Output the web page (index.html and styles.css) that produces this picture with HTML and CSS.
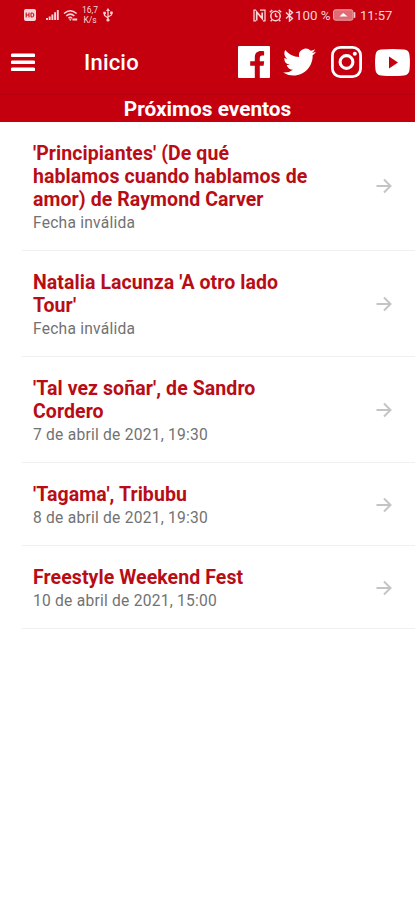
FILE: index.html
```html
<!DOCTYPE html>
<html lang="es">
<head>
<meta charset="utf-8">
<meta name="viewport" content="width=device-width, initial-scale=1">
<title>Inicio</title>
<link rel="stylesheet" href="styles.css">
</head>
<body>
<svg width="0" height="0" class="defs"><symbol id="arrow" viewBox="0 0 16 16"><path d="M0.5 8H14.5M8 1.5L14.5 8L8 14.5" fill="none" stroke="currentColor" stroke-width="2"/></symbol></svg>
<header class="header">
  <div class="status">
    <div class="status-left">
      <svg class="hd" width="12" height="12" viewBox="0 0 12 12"><rect width="12" height="12" rx="2" fill="currentColor"/><path d="M2.2 3.5v5M5 3.5v5M2.2 6H5M7 4v4h1.2q1.6 0 1.6-2T8.2 4z" fill="none" stroke="#c4000f" stroke-width="1"/></svg>
      <svg class="signal" width="13" height="12" viewBox="0 0 13 12"><path d="M1 11V9M3.7 11V7.5M6.4 11V5.5M9.1 11V3.2M11.8 11V1" stroke="currentColor" stroke-width="1.9"/></svg>
      <svg class="wifi" width="15" height="13" viewBox="0 0 15 13"><path d="M1 4.5Q7.3-1 13.6 4.5M3.2 7Q7.3 3.2 11.4 7M5.4 9.2Q7.3 7.6 9 9.2" fill="none" stroke="currentColor" stroke-width="1.5"/><path d="M6 10.3h2.6L7.3 12zM9.4 9.5h4.8v2H9.4z" fill="currentColor"/></svg>
      <div class="speed"><span>16,7</span><span>K/s</span></div>
      <svg class="usb" width="10" height="14" viewBox="0 0 10 14"><path d="M5 2v10M1.5 5v2.5L5 10M8.5 4.5V7L5 9" fill="none" stroke="currentColor" stroke-width="1.2"/><path d="M5 0L7 3H3zM.3 3.7h2.5v2.5H.3zM7.2 3.5h2.5V6H7.2z" fill="currentColor"/><circle cx="5" cy="12" r="1.6" fill="currentColor"/></svg>
    </div>
    <div class="status-right">
      <svg width="13" height="13" viewBox="0 0 13 13"><path d="M3 1.2H1v10.6h2.2M7 1.2h5v10.6h-2" fill="none" stroke="currentColor" stroke-width="1.3"/><path d="M3.7 11.5V3L9.2 9.5V3.5" fill="none" stroke="currentColor" stroke-width="1.7"/></svg>
      <svg class="alarm" width="13" height="13" viewBox="0 0 13 13"><circle cx="6.5" cy="7" r="4.7" fill="none" stroke="currentColor" stroke-width="1.5"/><path d="M6.5 4.3V7l2 1M.8 3.3L3.3 1M12.2 3.3L9.7 1M3 10.7l-1.3 1.6M10 10.7l1.3 1.6" fill="none" stroke="currentColor" stroke-width="1.4"/></svg>
      <svg class="bt" width="9" height="13" viewBox="0 0 9 13"><path d="M1 3.5l6.5 6-3 2.5V1l3 2.5-6.5 6" fill="none" stroke="currentColor" stroke-width="1.4"/></svg>
      <span class="percent">100 %</span>
      <svg class="battery" width="23" height="12" viewBox="0 0 23 12"><rect x=".5" y=".8" width="19.5" height="10.4" rx="2" fill="#df6c74" stroke="#eaa0a5"/><path d="M21.5 3.2v5.6" stroke="#f6d0d2" stroke-width="1.6"/><path d="M6.5 7.5L10.2 4L14.5 7.5z" fill="#fff"/></svg>
      <span class="clock">11:57</span>
    </div>
  </div>
  <nav class="toolbar">
    <svg class="menu" width="24" height="19" viewBox="0 0 24 19"><path d="M1.4 2.2h21.2M1.4 9.2h21.2M1.4 16.3h21.2" stroke="#fff" stroke-width="3.6" stroke-linecap="round"/></svg>
    <h1 class="title">Inicio</h1>
    <div class="social">
      <svg width="32" height="32" viewBox="0 0 32 32"><path fill="#fff" d="M1 0h30Q32 0 32 1v30q0 1-1 1h-9.2V19.7h3.8l.6-4.4h-4.4v-3.1c0-1.6.6-2.6 2.4-2.6h1.9V5.2c-.5-.1-1.6-.2-3-.2-3.9 0-6.3 2.2-6.3 6.3v4h-4.6v4.4h4.6V32H1Q0 32 0 31V1Q0 0 1 0z"/></svg>
      <svg width="33" height="28" viewBox="0 1.8 24 20.3" preserveAspectRatio="none"><path fill="#fff" d="M23.953 4.57a10 10 0 01-2.825.775 4.958 4.958 0 002.163-2.723c-.951.555-2.005.959-3.127 1.184a4.92 4.92 0 00-8.384 4.482C7.69 8.095 4.067 6.13 1.64 3.162a4.822 4.822 0 00-.666 2.475c0 1.71.87 3.213 2.188 4.096a4.904 4.904 0 01-2.228-.616v.06a4.923 4.923 0 003.946 4.827 4.996 4.996 0 01-2.212.085 4.936 4.936 0 004.604 3.417 9.867 9.867 0 01-6.102 2.105c-.39 0-.779-.023-1.17-.067a13.995 13.995 0 007.557 2.209c9.053 0 13.998-7.496 13.998-13.985 0-.21 0-.42-.015-.63A9.935 9.935 0 0024 4.59z"/></svg>
      <svg width="31" height="32" viewBox="0 0 31 32"><g fill="none" stroke="#fff"><rect x="1.4" y="1.4" width="28.2" height="29.2" rx="8" stroke-width="2.8"/><circle cx="15.5" cy="16" r="6.4" stroke-width="3.1"/></g><circle cx="23.8" cy="7.8" r="2" fill="#fff"/></svg>
      <svg width="35" height="27" viewBox="0 0 35 27"><path fill="#fff" fill-rule="evenodd" d="M6 .6Q17.5-.6 29 .6Q34 1 34.5 6Q35.4 13.5 34.5 21Q34 26 29 26.4Q17.5 27.6 6 26.4Q1 26 .5 21Q-.4 13.5 .5 6Q1 1 6 .6zM14 7.6v12l9-6z"/></svg>
    </div>
  </nav>
  <h2 class="banner"><span>Próximos eventos</span></h2>
</header>
<main class="events">
  <article class="event">
    <div><h3>'Principiantes' (De qué<br>hablamos cuando hablamos de<br>amor) de Raymond Carver</h3><p>Fecha inválida</p></div>
    <svg class="arrow"><use href="#arrow"/></svg>
  </article>
  <article class="event">
    <div><h3>Natalia Lacunza 'A otro lado<br>Tour'</h3><p>Fecha inválida</p></div>
    <svg class="arrow"><use href="#arrow"/></svg>
  </article>
  <article class="event">
    <div><h3>'Tal vez soñar', de Sandro<br>Cordero</h3><p>7 de abril de 2021, 19:30</p></div>
    <svg class="arrow"><use href="#arrow"/></svg>
  </article>
  <article class="event">
    <div><h3>'Tagama', Tribubu</h3><p>8 de abril de 2021, 19:30</p></div>
    <svg class="arrow"><use href="#arrow"/></svg>
  </article>
  <article class="event">
    <div><h3>Freestyle Weekend Fest</h3><p>10 de abril de 2021, 15:00</p></div>
    <svg class="arrow"><use href="#arrow"/></svg>
  </article>
</main>
</body>
</html>
```
FILE: styles.css
```css
* { box-sizing: border-box; }
body { margin: 0; min-height: 900px; background: #fff; font-family: Roboto, sans-serif; }
h1, h2, h3, p { margin: 0; }
svg { display: block; flex: none; }
.defs { height: 0; }
.header { height: 122px; background: #c4000f; color: #fff; }
.status { height: 30px; display: flex; justify-content: space-between; align-items: center; padding: 0 23px 0 24px; color: #f9d5d8; }
.status-left, .status-right { display: flex; align-items: center; }
.signal { margin-left: 10px; }
.wifi { margin-left: 4px; }
.speed { display: flex; flex-direction: column; align-items: center; width: 18px; margin-left: 3px; font-size: 8.5px; line-height: 10px; }
.usb { margin-left: 4px; }
.alarm { margin-left: 3px; }
.bt { margin-left: 3px; }
.percent { margin-left: 1px; width: 36px; font-size: 13.3px; white-space: nowrap; }
.battery { margin-left: 2px; }
.clock { margin-left: 4px; width: 32px; font-size: 13px; }
.toolbar { height: 64px; display: flex; align-items: center; padding: 0 5px 0 11px; }
.title { margin-left: 49px; padding-top: 2px; font-size: 22px; font-weight: 500; line-height: 28px; letter-spacing: 0.2px; }
.social { margin-left: auto; display: flex; align-items: center; }
.social svg + svg { margin-left: 13px; }
.social svg:nth-child(3) { margin-left: 15px; }
.banner { height: 28px; border-top: 1px solid #b9000e; text-align: center; font-size: 20.8px; font-weight: 700; line-height: 29px; }
.events { margin-left: 22px; }
.event { display: flex; justify-content: space-between; align-items: center; padding: 21.3px 23px 17.2px 11px; border-bottom: 1px solid #f0f0f0; }
.event:first-child { padding-bottom: 17.7px; }
.event h3 { font-size: 19.5px; font-weight: 700; line-height: 22.8px; color: #b90d16; letter-spacing: 0.08px; white-space: nowrap; }
.event p { margin-top: 3.3px; font-size: 15.6px; line-height: 17.5px; color: #727272; letter-spacing: 0.23px; }
.arrow { width: 16px; height: 16px; margin-bottom: 3px; color: #c4c4c4; }
```
